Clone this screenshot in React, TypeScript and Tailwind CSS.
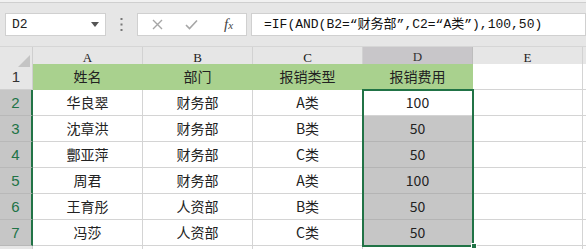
import React from "react";

const rows = [
  ["华良翠", "财务部", "A类", "100"],
  ["沈章洪", "财务部", "B类", "50"],
  ["酆亚萍", "财务部", "C类", "50"],
  ["周君", "财务部", "A类", "100"],
  ["王育彤", "人资部", "B类", "50"],
  ["冯莎", "人资部", "C类", "50"],
];

const cols = ["A", "B", "C", "D", "E"];

const cjk = { fontFamily: '"Noto Sans CJK SC", "Liberation Sans", sans-serif' };
const mono = { fontFamily: '"Liberation Mono", "Noto Sans CJK SC", monospace' };

export default function App() {
  return (
    <div className="w-[586px] h-[249px] overflow-hidden bg-[#e6e6e6] select-none">
      {/* top strip */}
      <div className="h-[3px] bg-[#f1f1f1] border-b border-[#cfcfcf]" />

      {/* formula bar */}
      <div className="flex h-[43px] pt-[10px] pl-[5px]">
        <div className="flex items-center justify-between w-[101px] h-[23px] bg-white border border-[#d0d0d0] pl-[6px] pr-[6px]">
          <span className="text-[13px] text-[#222]" style={mono}>D2</span>
          <svg width="8" height="5" viewBox="0 0 8 5">
            <path d="M0 0 H8 L4 5 Z" fill="#555" />
          </svg>
        </div>
        <div className="w-[31px] h-[23px] flex items-center justify-center">
          <svg width="3" height="13" viewBox="0 0 3 13">
            <rect x="0.5" y="0" width="2" height="2" fill="#777" />
            <rect x="0.5" y="5.5" width="2" height="2" fill="#777" />
            <rect x="0.5" y="11" width="2" height="2" fill="#777" />
          </svg>
        </div>
        <div className="flex items-center w-[110px] h-[23px] bg-white border border-[#d0d0d0]">
          <svg className="ml-[14px]" width="11" height="11" viewBox="0 0 11 11">
            <path d="M1 1 L10 10 M10 1 L1 10" stroke="#a6a6a6" strokeWidth="1.4" />
          </svg>
          <svg className="ml-[22px]" width="13" height="11" viewBox="0 0 13 11">
            <path d="M1 6 L4.5 9.5 L12 1.5" stroke="#a6a6a6" strokeWidth="1.6" fill="none" />
          </svg>
          <span
            className="ml-[26px] text-[15px] italic text-[#444]"
            style={{ fontFamily: '"Liberation Serif", serif' }}
          >
            f<span className="text-[11px]">x</span>
          </span>
        </div>
        <div
          className="flex items-center flex-1 h-[23px] ml-[4px] bg-white border border-[#d0d0d0] pl-[12px] text-[13px] text-[#111] whitespace-nowrap"
          style={mono}
        >
          =IF(AND(B2=“财务部”,C2=“A类”),100,50)
        </div>
      </div>

      {/* sheet */}
      <div className="relative">
        {/* column header */}
        <div
          className="grid grid-cols-[33px_110px_110px_110px_110px_110px_1fr] h-[18px] bg-[#e6e6e6] border-t border-[#d6d6d6]"
          style={{ fontFamily: '"Liberation Serif", serif' }}
        >
          <div className="relative border-r border-[#cfcfcf]">
            <svg className="absolute right-[2px] bottom-[2px]" width="12" height="12" viewBox="0 0 12 12">
              <path d="M12 0 V12 H0 Z" fill="#c4c4c4" />
            </svg>
          </div>
          {cols.map((c) => (
            <div
              key={c}
              className={
                c === "D"
                  ? "flex items-center justify-center text-[13px] text-[#333] bg-[#c8c6c9] border-r border-[#bdbdbd] border-b-2 border-b-[#217346]"
                  : "flex items-center justify-center text-[13px] text-[#222] border-r border-[#d2d2d2] border-b border-b-[#c8c8c8]"
              }
            >
              {c}
            </div>
          ))}
          <div className="border-b border-[#c8c8c8]" />
        </div>

        {/* rows */}
        <div className="grid grid-cols-[33px_110px_110px_110px_110px_110px_1fr] auto-rows-[26px]" style={cjk}>
          <div className="flex items-end justify-center pb-[1px] text-[15px] text-[#333] bg-[#e6e6e6] border-r border-b border-[#cfcfcf]" style={{ fontFamily: '"Liberation Sans", sans-serif' }}>
            1
          </div>
          {["姓名", "部门", "报销类型", "报销费用"].map((h) => (
            <div
              key={h}
              className="flex items-center justify-center text-[14px] text-[#222] bg-[#a9d18e] border-r border-b border-[#a9d18e]"
            >
              {h}
            </div>
          ))}
          <div className="bg-white border-r border-b border-[#d4d4d4]" />
          <div className="bg-white border-b border-[#d4d4d4]" />

          {rows.map((r, i) => (
            <React.Fragment key={i}>
              <div
                className="flex items-end justify-center pb-[1px] text-[15px] text-[#217346] bg-[#c6c6c6] border-r-2 border-r-[#217346] border-b border-b-[#b8b8b8]"
                style={{ fontFamily: '"Liberation Sans", sans-serif' }}
              >
                {i + 2}
              </div>
              {r.map((v, j) => (
                <div
                  key={j}
                  className={
                    j === 3 && i > 0
                      ? "flex items-center justify-center text-[14px] text-[#222] bg-[#c6c6c6] border-r border-b border-[#b4b4b4]"
                      : "flex items-center justify-center text-[14px] text-[#222] bg-white border-r border-b border-[#d4d4d4]"
                  }
                >
                  {v}
                </div>
              ))}
              <div className="bg-white border-r border-b border-[#d4d4d4]" />
              <div className="bg-white border-b border-[#d4d4d4]" />
            </React.Fragment>
          ))}
          <div className="bg-[#e6e6e6] border-r border-[#cfcfcf] h-[26px]" />
          {cols.map((c) => (
            <div key={c} className="bg-white border-r border-[#d4d4d4]" />
          ))}
          <div className="bg-white" />
        </div>

        {/* selection D2:D7 */}
        <div className="absolute left-[362px] top-[43px] w-[112px] h-[158px] border-2 border-[#217346] pointer-events-none" />
        <div className="absolute left-[471px] top-[197px] w-[6px] h-[6px] bg-[#217346] border border-white" />
      </div>
    </div>
  );
}
